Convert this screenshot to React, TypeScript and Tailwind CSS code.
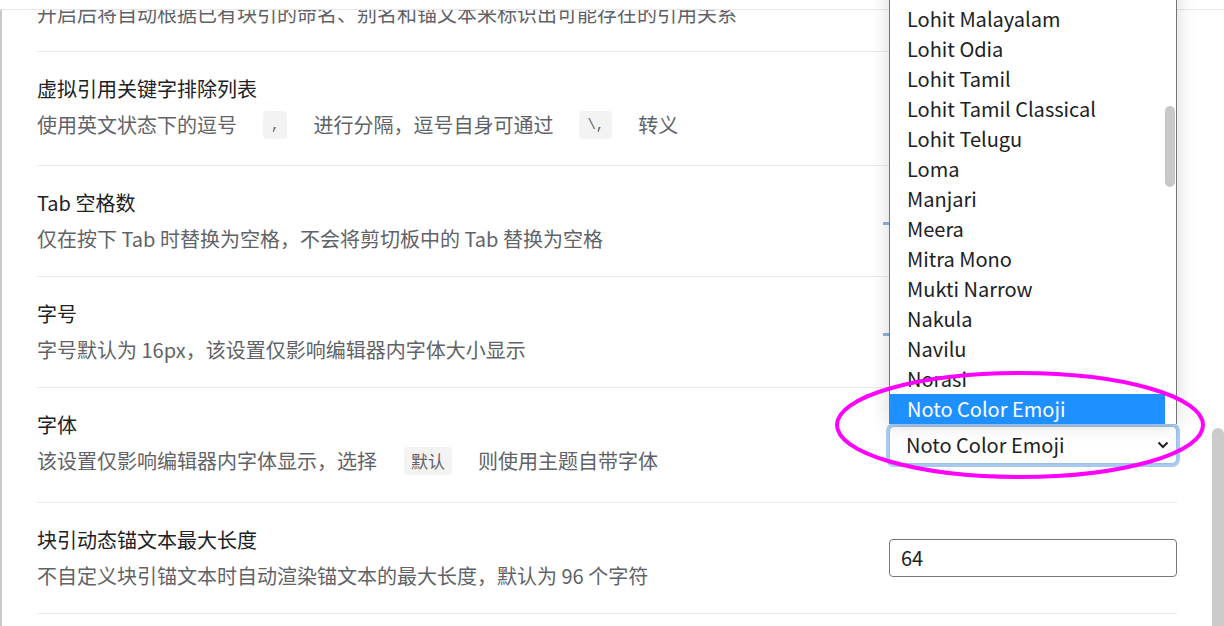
import React from "react";

const fontList = [
  "Lohit Kannada",
  "Lohit Malayalam",
  "Lohit Odia",
  "Lohit Tamil",
  "Lohit Tamil Classical",
  "Lohit Telugu",
  "Loma",
  "Manjari",
  "Meera",
  "Mitra Mono",
  "Mukti Narrow",
  "Nakula",
  "Navilu",
  "Norasi",
  "Noto Color Emoji",
];

const Code = ({ children }: { children: React.ReactNode }) => (
  <span className="mx-[26px] inline-block h-[28px] rounded-[4px] bg-[#f3f3f3] px-[8px] font-['Liberation_Mono',monospace] text-[14px] leading-[28px] text-[#5f6368]">
    {children}
  </span>
);

const Chip = ({ children }: { children: React.ReactNode }) => (
  <span className="ml-[27px] mr-[26px] inline-block h-[28px] rounded-[4px] bg-[#f3f3f3] px-[7px] text-[17px] leading-[28px] text-[#5f6368]">
    {children}
  </span>
);

const Row = ({
  title,
  desc,
  pb,
  control,
}: {
  title: string;
  desc: React.ReactNode;
  pb?: string;
  control?: React.ReactNode;
}) => (
  <div className={"flex items-center border-b border-[#ebebeb] pt-[22px] " + (pb ?? "pb-[22px]")}>
    <div className="flex-1">
      <div className="text-[20px] leading-[30px] text-[#202124]">{title}</div>
      <div className="mt-[6px] flex h-[30px] items-center text-[20px] leading-[30px] text-[#5f6368]">{desc}</div>
    </div>
    {control}
  </div>
);

const Slider = () => (
  <div className="mt-[5px] flex h-[6px] w-[294px] items-center">
    <div className="h-[3px] w-full bg-[#8fb3dd]" />
  </div>
);

export default function App() {
  return (
    <div className="relative h-[626px] w-[1224px] overflow-hidden bg-white font-['Noto_Sans_CJK_SC','Noto_Sans',sans-serif]">
      <div className="h-[10px] border-b border-[#e8e8e8]" />
      <div className="flex h-[616px]">
        <div className="w-[2px] bg-[#c8c8c8]" />
        <div className="flex-1 overflow-hidden px-[35px]">
          <div className="-mt-[69px]">
            <Row
              title="块引用计数"
              desc="开启后将自动根据已有块引的命名、别名和锚文本来标识出可能存在的引用关系"
            />
            <Row
              title="虚拟引用关键字排除列表"
              pb="pb-[25px]"
              desc={
                <>
                  使用英文状态下的逗号<Code>,</Code>进行分隔，逗号自身可通过<Code>\,</Code>转义
                </>
              }
            />
            <Row
              title="Tab 空格数"
              desc="仅在按下 Tab 时替换为空格，不会将剪切板中的 Tab 替换为空格"
              control={<Slider />}
            />
            <Row
              title="字号"
              desc="字号默认为 16px，该设置仅影响编辑器内字体大小显示"
              control={<Slider />}
            />
            <Row
              title="字体"
              pb="pb-[26px]"
              desc={
                <>
                  该设置仅影响编辑器内字体显示，选择<Chip>默认</Chip>则使用主题自带字体
                </>
              }
              control={
                <div className="mt-[4px] flex h-[38px] w-[288px] items-center justify-between rounded-[5px] border border-[#9bbfe9] bg-white pl-[16px] pr-[7px] text-[20px] text-[#202124] ring-[3px] ring-[#a9caf0]">
                  <span>Noto Color Emoji</span>
                  <svg width="12" height="8" viewBox="0 0 12 8">
                    <path d="M1.5 1.5 L6 6 L10.5 1.5" fill="none" stroke="#222" strokeWidth="2" />
                  </svg>
                </div>
              }
            />
            <Row
              title="块引动态锚文本最大长度"
              desc="不自定义块引锚文本时自动渲染锚文本的最大长度，默认为 96 个字符"
              control={
                <div className="flex h-[38px] w-[288px] items-center rounded-[4px] border border-[#767676] pl-[11px] text-[20px] text-[#202124]">
                  64
                </div>
              }
            />
          </div>
        </div>
        <div className="w-[12px]">
          <div className="mt-[418px] h-[300px] rounded-t-[6px] bg-[#cbcbcb]" />
        </div>
      </div>

      {/* native select popup */}
      <div className="absolute left-[889px] top-[-26px] flex h-[450px] w-[288px] border-x border-[#767676] bg-white shadow-[0_0_18px_rgba(0,0,0,0.16)]">
        <div className="flex-1">
          {fontList.map((f) => (
            <div
              key={f}
              className={
                f === "Noto Color Emoji"
                  ? "h-[30px] bg-[#1e90ff] pl-[17px] text-[20px] leading-[30px] text-white"
                  : "h-[30px] pl-[17px] text-[20px] leading-[30px] text-[#202124]"
              }
            >
              {f}
            </div>
          ))}
        </div>
        <div className="w-[11px]">
          <div className="mt-[132px] h-[81px] w-[10px] rounded-[5px] bg-[#c8c8c8]" />
        </div>
      </div>

      <svg className="pointer-events-none absolute left-0 top-0" width="1224" height="626">
        <ellipse cx="1020" cy="425" rx="183" ry="52" fill="none" stroke="#ff00ff" strokeWidth="4" />
      </svg>
    </div>
  );
}
